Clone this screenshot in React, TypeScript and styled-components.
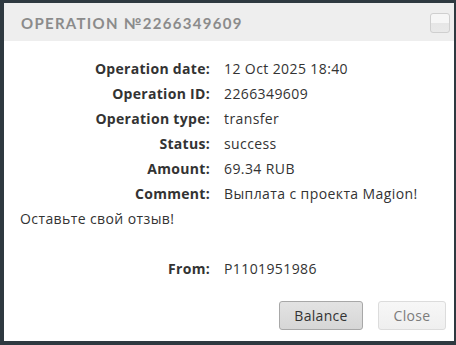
import React from "react";
import styled, { createGlobalStyle } from "styled-components";

const Global = createGlobalStyle`
  html, body { margin: 0; padding: 0; }
  body {
    background: #2e3940;
    width: 456px;
    height: 345px;
    overflow: hidden;
    font-family: "Open Sans", "Liberation Sans", sans-serif;
  }
`;

const Dialog = styled.div`
  margin: 3px 2px 0 4px;
  width: 450px;
  height: 338px;
  background: #ffffff;
  display: flex;
  flex-direction: column;
  box-sizing: border-box;
`;

const Header = styled.div`
  height: 38px;
  background: #eeeeee;
  display: flex;
  align-items: center;
  justify-content: space-between;
  padding: 0 4px 0 17px;
  flex-shrink: 0;
`;

const Title = styled.div`
  font-family: "Lato", "Open Sans", sans-serif;
  font-size: 15px;
  font-weight: 700;
  letter-spacing: 1.3px;
  color: #8b8b8b;
  padding-top: 1px;
`;

const CloseBox = styled.button`
  width: 20px;
  height: 20px;
  border: 1px solid #cfcfcf;
  border-radius: 3px;
  background: linear-gradient(#f6f6f6 0%, #f6f6f6 50%, #e6e6e6 50%, #e9e9e9 100%);
  padding: 0;
  margin-top: 2px;
`;

const Body = styled.div`
  flex: 1;
  display: flex;
  flex-direction: column;
  padding: 15px 8px 11px 16px;
  color: #333333;
  font-size: 14px;
  letter-spacing: 0.4px;
`;

const Grid = styled.div`
  display: grid;
  grid-template-columns: 190px 1fr;
  column-gap: 14px;
  grid-auto-rows: 25px;
  align-items: center;
`;

const Label = styled.div`
  font-weight: 700;
  text-align: right;
  color: #333;
  letter-spacing: 0.3px;
`;

const Value = styled.div`
  color: #333;
  white-space: nowrap;
`;

const Note = styled.div`
  height: 25px;
  line-height: 25px;
  color: #333;
  margin-bottom: 25px;
`;

const Footer = styled.div`
  margin-top: auto;
  display: flex;
  justify-content: flex-end;
  gap: 15px;
`;

const Button = styled.button<{ $primary?: boolean }>`
  height: 29px;
  box-sizing: border-box;
  padding: 0 14px;
  min-width: ${(p) => (p.$primary ? "84px" : "68px")};
  border-radius: 3px;
  font-family: "Open Sans", "Liberation Sans", sans-serif;
  font-size: 14px;
  letter-spacing: 0.3px;
  color: ${(p) => (p.$primary ? "#333" : "#7c7c7c")};
  border: 1px solid ${(p) => (p.$primary ? "#a8a8a8" : "#dcdcdc")};
  background: ${(p) =>
    p.$primary
      ? "linear-gradient(#e3e3e3, #d6d6d6)"
      : "linear-gradient(#f7f7f7, #efefef)"};
`;

const rows: [string, string][] = [
  ["Operation date:", "12 Oct 2025 18:40"],
  ["Operation ID:", "2266349609"],
  ["Operation type:", "transfer"],
  ["Status:", "success"],
  ["Amount:", "69.34 RUB"],
  ["Comment:", "Выплата с проекта Magion!"],
];

export default function App() {
  return (
    <>
      <Global />
      <Dialog>
        <Header>
          <Title>OPERATION №2266349609</Title>
          <CloseBox aria-label="close" />
        </Header>
        <Body>
          <Grid>
            {rows.map(([l, v]) => (
              <React.Fragment key={l}>
                <Label>{l}</Label>
                <Value>{v}</Value>
              </React.Fragment>
            ))}
          </Grid>
          <Note>Оставьте свой отзыв!</Note>
          <Grid>
            <Label>From:</Label>
            <Value>P1101951986</Value>
          </Grid>
          <Footer>
            <Button $primary>Balance</Button>
            <Button>Close</Button>
          </Footer>
        </Body>
      </Dialog>
    </>
  );
}
